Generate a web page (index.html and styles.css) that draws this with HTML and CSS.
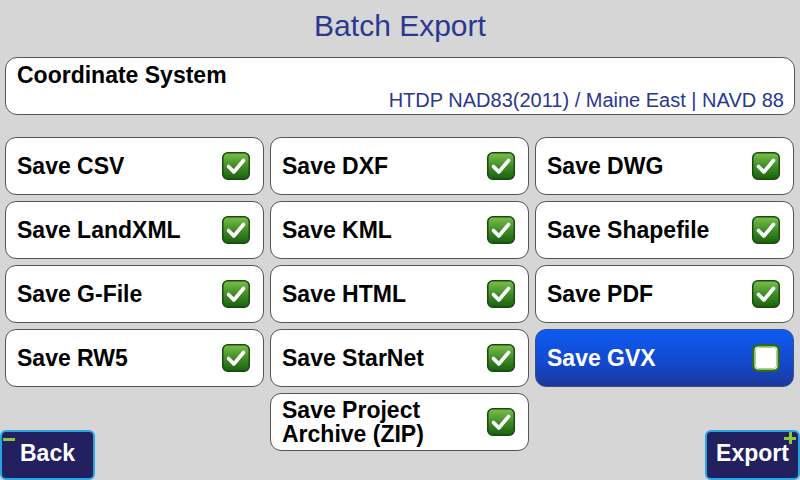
FILE: index.html
```html
<!DOCTYPE html>
<html>
<head>
<meta charset="utf-8">
<link rel="stylesheet" href="styles.css">
</head>
<body>
<svg width="0" height="0" class="defs">
  <defs>
    <linearGradient id="gchk" x1="0" y1="0" x2="0" y2="1">
      <stop offset="0" stop-color="#7cc04e"/>
      <stop offset="0.5" stop-color="#3f8f25"/>
      <stop offset="1" stop-color="#1e5e10"/>
    </linearGradient>
    <symbol id="chk" viewBox="0 0 28 28">
      <rect x="0.75" y="0.75" width="26.5" height="26.5" rx="5" fill="url(#gchk)" stroke="#1b4a0e" stroke-width="1.5"/>
      <path d="M6.5 14.5 L11.8 20 L21.5 8.5" fill="none" stroke="#fff" stroke-width="3.6" stroke-linecap="round" stroke-linejoin="round"/>
    </symbol>
    <symbol id="unchk" viewBox="0 0 28 28">
      <rect x="1.25" y="1.25" width="25.5" height="25.5" rx="5" fill="#fff" stroke="#2f6a17" stroke-width="2.5"/>
      <rect x="3.5" y="3.5" width="21" height="21" rx="3" fill="none" stroke="#a8d38a" stroke-width="1"/>
    </symbol>
  </defs>
</svg>
<div class="page">
  <h1 class="title">Batch Export</h1>
  <div class="coord">
    <div class="coord-label">Coordinate System</div>
    <div class="coord-value">HTDP NAD83(2011) / Maine East | NAVD 88</div>
  </div>
  <div class="grid">
    <div class="opt"><span>Save CSV</span><svg class="cb"><use href="#chk"/></svg></div>
    <div class="opt"><span>Save DXF</span><svg class="cb"><use href="#chk"/></svg></div>
    <div class="opt"><span>Save DWG</span><svg class="cb"><use href="#chk"/></svg></div>
    <div class="opt"><span>Save LandXML</span><svg class="cb"><use href="#chk"/></svg></div>
    <div class="opt"><span>Save KML</span><svg class="cb"><use href="#chk"/></svg></div>
    <div class="opt"><span>Save Shapefile</span><svg class="cb"><use href="#chk"/></svg></div>
    <div class="opt"><span>Save G-File</span><svg class="cb"><use href="#chk"/></svg></div>
    <div class="opt"><span>Save HTML</span><svg class="cb"><use href="#chk"/></svg></div>
    <div class="opt"><span>Save PDF</span><svg class="cb"><use href="#chk"/></svg></div>
    <div class="opt"><span>Save RW5</span><svg class="cb"><use href="#chk"/></svg></div>
    <div class="opt"><span>Save StarNet</span><svg class="cb"><use href="#chk"/></svg></div>
    <div class="opt selected"><span>Save GVX</span><svg class="cb"><use href="#unchk"/></svg></div>
    <div class="opt col2"><span>Save Project<br>Archive (ZIP)</span><svg class="cb"><use href="#chk"/></svg></div>
  </div>
  <div class="btn back"><span class="minus"></span>Back</div>
  <div class="btn export"><span class="plus"></span>Export</div>
</div>
</body>
</html>
```

FILE: styles.css
```css
html, body {
  margin: 0;
  padding: 0;
  background: #d6d6d6;
}
.defs {
  position: absolute;
  width: 0;
  height: 0;
}
.page {
  position: relative;
  width: 800px;
  height: 480px;
  overflow: hidden;
  font-family: "Liberation Sans", Arial, sans-serif;
  display: flex;
  flex-direction: column;
}
.title {
  margin: 0;
  height: 57px;
  line-height: 52px;
  text-align: center;
  font-weight: normal;
  font-size: 30px;
  color: #2a3891;
}
.coord {
  margin: 0 5px;
  height: 58px;
  box-sizing: border-box;
  background: #fff;
  border: 1px solid #555;
  border-radius: 12px;
  padding: 3px 10px 0 11px;
}
.coord-label {
  font-weight: bold;
  font-size: 23px;
  line-height: 28px;
  color: #000;
}
.coord-value {
  text-align: right;
  font-size: 20px;
  line-height: 22px;
  color: #2a3891;
}
.grid {
  margin: 22px 6px 0 5px;
  display: grid;
  grid-template-columns: repeat(3, 1fr);
  grid-auto-rows: 58px;
  gap: 6px;
}
.opt {
  box-sizing: border-box;
  background: #fff;
  border: 1px solid #555;
  border-radius: 11px;
  display: flex;
  align-items: center;
  justify-content: space-between;
  padding: 0 13px 0 11px;
  font-weight: bold;
  font-size: 23px;
  line-height: 24px;
  color: #000;
}
.opt.col2 {
  grid-column: 2;
}
.opt.selected {
  background: linear-gradient(#0b5cf2, #1546c8 65%, #1a3a98);
  border-color: #3b4e88;
  color: #fff;
}
.cb {
  width: 28px;
  height: 28px;
  flex: none;
}
.btn {
  position: absolute;
  bottom: 0;
  width: 95px;
  height: 50px;
  box-sizing: border-box;
  background: #23205f;
  border: 2px solid #27a6e2;
  border-radius: 6px;
  color: #fff;
  font-weight: bold;
  font-size: 23px;
  display: flex;
  align-items: center;
  justify-content: center;
  padding-bottom: 4px;
}
.back {
  left: 0;
}
.export {
  right: 0;
}
.minus {
  position: absolute;
  left: 1px;
  top: 6px;
  width: 12px;
  height: 3px;
  background: #8cc63f;
}
.plus {
  position: absolute;
  right: 2px;
  top: 0px;
  width: 12px;
  height: 12px;
  background:
    linear-gradient(#8cc63f, #8cc63f) center / 12px 3px no-repeat,
    linear-gradient(#8cc63f, #8cc63f) center / 3px 12px no-repeat;
}
```
